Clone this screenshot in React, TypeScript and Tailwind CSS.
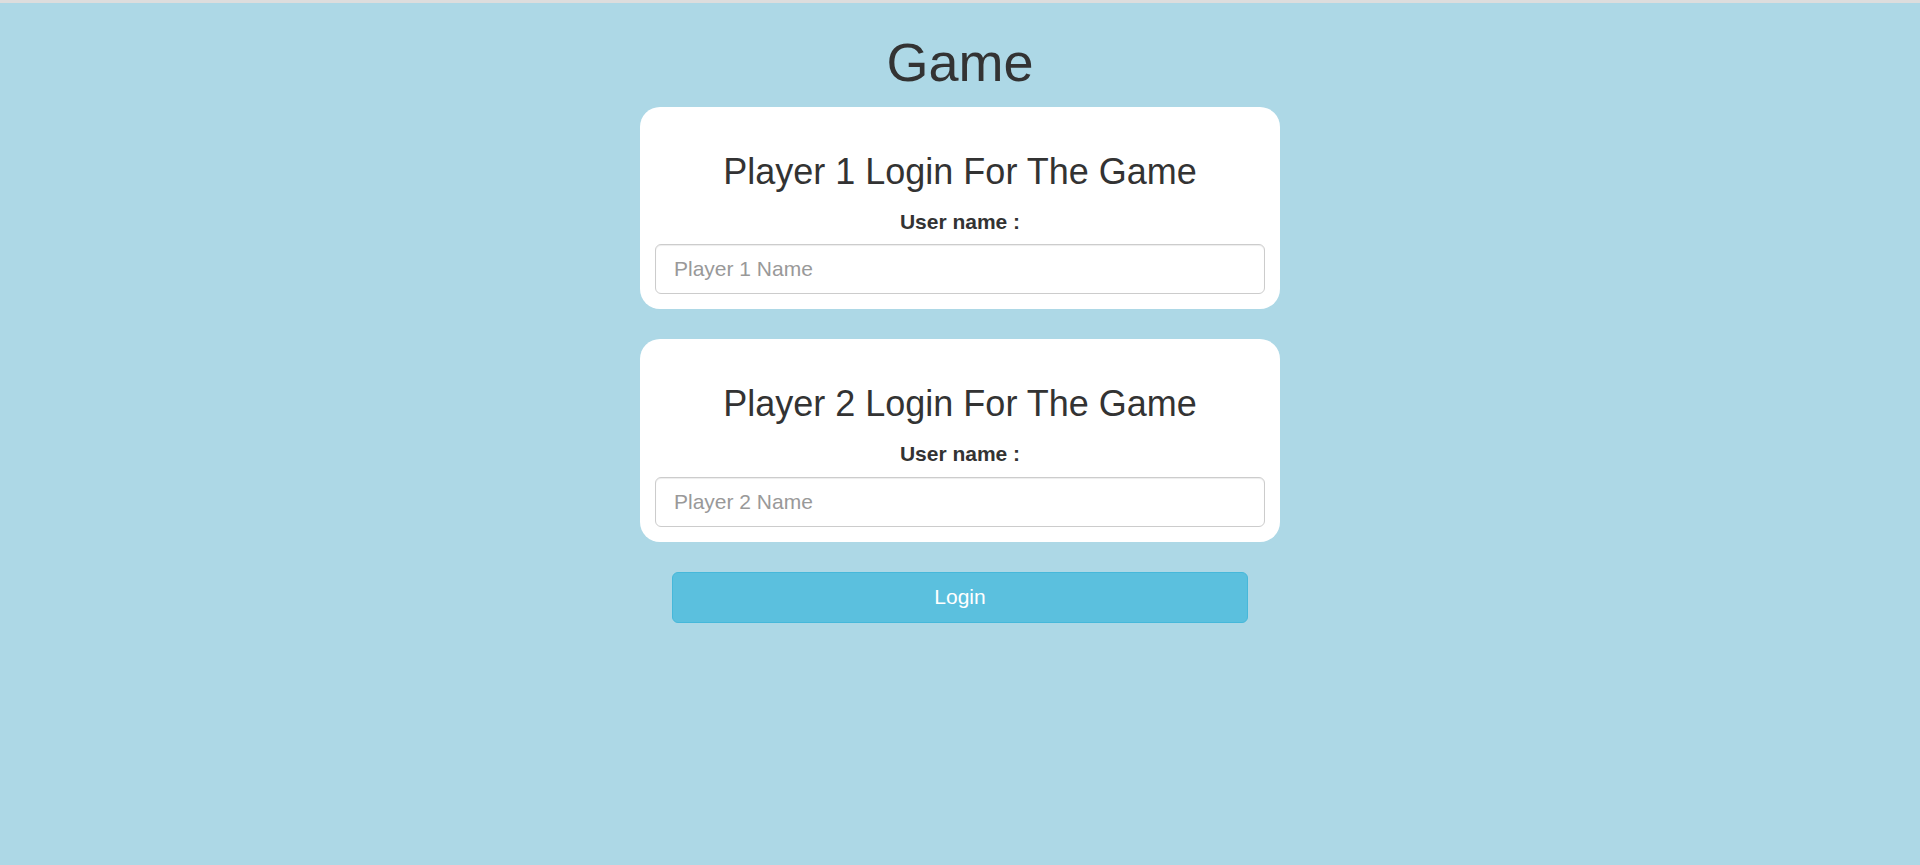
const PLAYERS = [1, 2];

function PlayerCard({ n }: { n: number }) {
  return (
    <div className="w-[640px] rounded-[20px] bg-white p-[15px] text-center">
      <h3 className="mt-[30px] mb-[15px] text-[36px] leading-[1.1] font-normal text-[#333]">
        Player {n} Login For The Game
      </h3>
      <label className="mb-[7.5px] block text-[21px] leading-[30px] font-bold text-[#333]">
        User name :
      </label>
      <input
        type="text"
        placeholder={`Player ${n} Name`}
        className="block h-[50px] w-full rounded-[6px] border border-[#ccc] bg-white px-[18px] py-[9px] text-[21px] text-[#555] shadow-[inset_0_1px_1px_rgba(0,0,0,0.075)] outline-none placeholder:text-[#999]"
      />
    </div>
  );
}

export default function App() {
  return (
    <div className="min-h-screen border-t-[3px] border-[#dddddd] bg-[#add8e6] font-['Liberation_Sans',Arial,sans-serif] text-[#333]">
      <div className="flex flex-col items-center">
        <h1 className="mt-[30px] mb-[15px] text-[54px] leading-[1.1] font-normal text-[#333]">
          Game
        </h1>
        <div className="flex flex-col gap-[30px]">
          {PLAYERS.map((n) => (
            <PlayerCard key={n} n={n} />
          ))}
        </div>
        <button
          type="button"
          className="mt-[30px] h-[51px] w-[576px] rounded-[6px] border border-[#46b8da] bg-[#5bc0de] text-[21px] leading-[1.42857] text-white"
        >
          Login
        </button>
      </div>
    </div>
  );
}
